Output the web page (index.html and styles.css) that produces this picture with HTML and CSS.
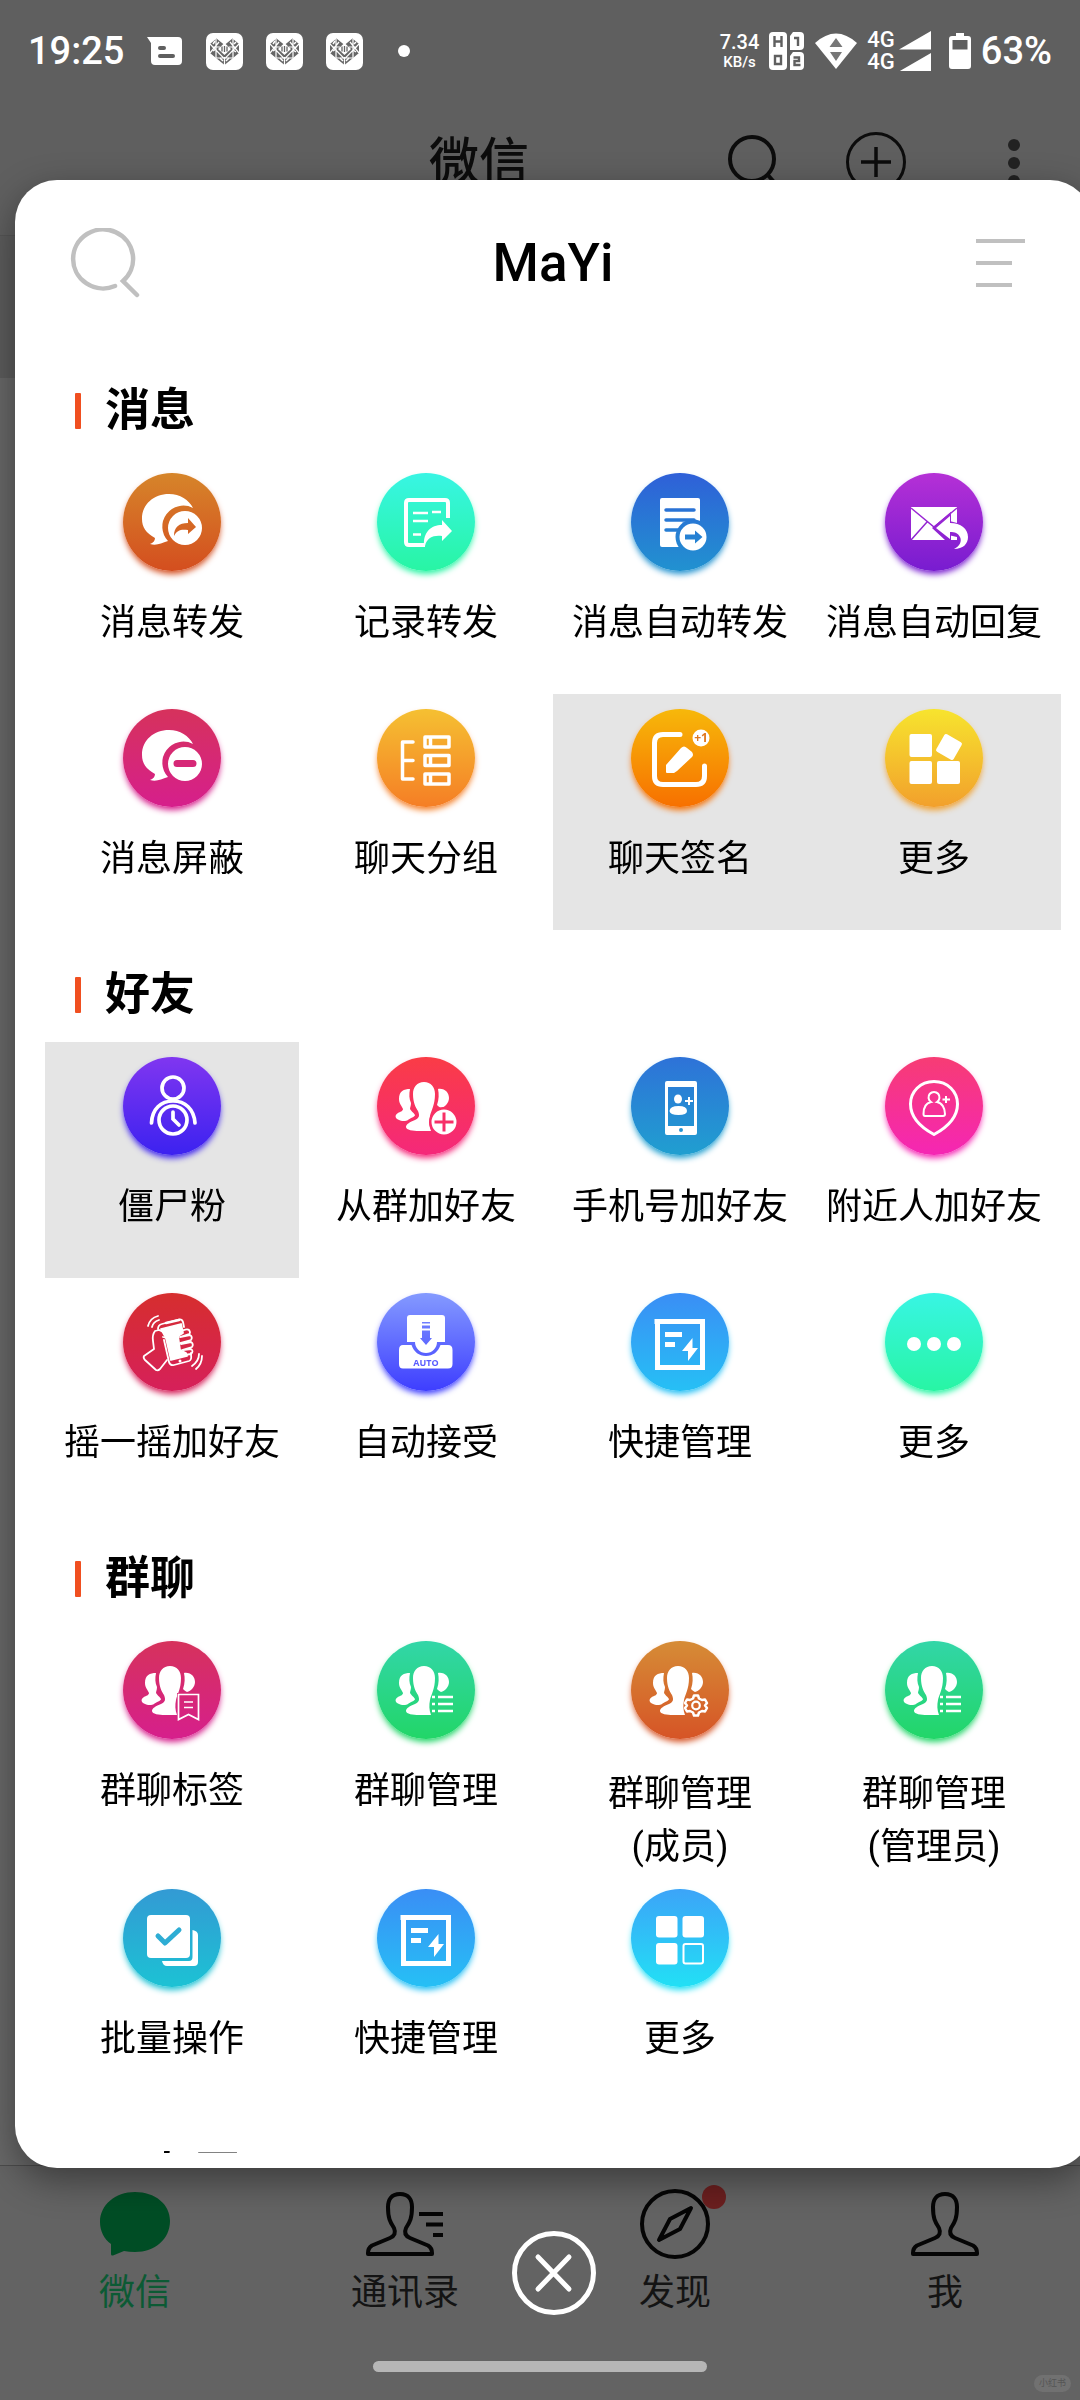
FILE: index.html
```html
<!DOCTYPE html>
<html lang="zh-CN">
<head>
    <meta charset="UTF-8">
    <meta name="viewport" content="width=device-width, initial-scale=1.0">
    <title>MaYi</title>
    <link rel="stylesheet" href="styles.css">
</head>
<body>
    <!-- shared icon shapes -->
    <svg class="defs" aria-hidden="true">
        <defs>
            <symbol id="bubble" viewBox="0 0 98 98">
                <path d="M70 35C66 27 57 21 46 21C31 21 19 31 19 46C19 54 23 60 32 65C32 68 30 70 27 71C34 73 38 70 45 68A21 21 0 0 1 70 35Z"/>
            </symbol>
            <symbol id="people" viewBox="0 0 98 98">
                <path d="M47 25C40 25 36 30 36 37C36 46 39 51 41 54C43 59 42 61 38 63C33 65 29 67 29 70C29 73 36 74 42 74H54C52 69 52 64 53 59C54 54 58 48 58 37C58 30 54 25 47 25Z"/>
                <path d="M33 32C27 32 22 34 22 42C22 47 25 49 26 52C26 54 23 55 21 56C18 58 18 60 20 62C23 64 28 65 31 63C33 61 38 60 38 58C36 55 34 54 33 52C33 50 34 49 34 46C32 42 32 37 33 32Z"/>
                <path d="M61 32C68 31 72 36 72 41C72 46 68 50 64 51C62 50 61 49 60 48C62 42 62 37 61 32Z"/>
            </symbol>
            <symbol id="people-list" viewBox="0 0 98 98">
                <use href="#people"/>
                <path d="M55 56h3M55 63h3M55 70h3M61 56h15M61 63h15M61 70h15" stroke="#fff" stroke-width="2.4"/>
            </symbol>
            <symbol id="quick" viewBox="0 0 98 98">
                <path d="M26 28.500H71.500V74.500H26.500V28.500" fill="none" stroke="#fff" stroke-width="5" stroke-linecap="square"/>
                <path d="M34 39h17v5H34zM34 49h10v5H34zM61.500 45L51 58H57V68L67 55H61.500Z"/>
            </symbol>
            <symbol id="heart-app" viewBox="0 0 37 37">
                <rect width="37" height="37" rx="7" fill="#fff"/>
                <path d="M10.500 5.500L4 11V20L18.500 32L33 20V11L26.500 5.500L18.500 12Z" fill="#666"/>
                <path d="M4 11L18.500 26L33 11M4 20L13 9M33 20L24 9M10 6V25M27 6V25M6 14H14M23 14H31M10 25H27M18.500 24V32" fill="none" stroke="#fff" stroke-width="1.200"/>
                <path d="M7 11l2-3M28 11l2-2M7 18l3-2M27 17l3 2M14 25l3 3M20 28l3-3" stroke="#fff" stroke-width="1.500"/>
                <path d="M18.500 10L25 16L18.500 22L12 16Z" fill="#fff"/>
                <path d="M16 13.500v5M18.500 13v6M21 13.500v5" stroke="#666" stroke-width="1.300"/>
            </symbol>
        </defs>
    </svg>

    <div class="app">
        <div class="status-bar">
            <div class="status-left">
                <span class="clock">19:25</span>
                <svg width="36" height="30" viewBox="0 0 36 30"><path fill="#fff" d="M0 1H31Q35 1 35 5V25Q35 29 31 29H8Q4 29 4 25V7Z"/><path d="M13 12h4M13 20h13" stroke="#5f5f5f" stroke-width="4" stroke-linecap="round"/></svg>
                <svg width="37" height="37"><use href="#heart-app"/></svg>
                <svg width="37" height="37"><use href="#heart-app"/></svg>
                <svg width="37" height="37"><use href="#heart-app"/></svg>
                <span class="more-dot"></span>
            </div>
            <div class="status-right">
                <div class="net-speed"><span>7.34</span><small>KB/s</small></div>
                <svg width="36" height="38" viewBox="0 0 36 38"><rect width="18" height="38" rx="4" fill="#fff"/><path d="M24 0H31Q35 0 35 4V14Q35 18 31 18H21V4ZM24 20H31Q35 20 35 24V34Q35 38 31 38H21V24Z" fill="#fff"/><path d="M5.500 4V15M12.500 4V15M5.500 9.500H12.500M6 24H12V32H6ZM25 6H29V14M24.500 25.500H30V29H25.500V33H31.500" fill="none" stroke="#5f5f5f" stroke-width="2.400"/></svg>
                <svg width="42" height="36" viewBox="0 0 42 36"><path d="M0 10Q21 -9 42 10L21 36Z" fill="#fff"/><path d="M14.500 14L21 5L27.500 14ZM15 19H27L21 28Z" fill="#777"/></svg>
                <div class="sims"><span>4G</span><span>4G</span></div>
                <svg class="signal" width="32" height="40" viewBox="0 0 32 40"><path d="M0 18.500L32 0V18.500ZM0 40.500L32 22V40.500Z" fill="#fff"/></svg>
                <svg class="battery" width="22" height="36" viewBox="0 0 22 36"><path d="M7 0H15V3H19Q22 3 22 6V33Q22 36 19 36H3Q0 36 0 33V6Q0 3 3 3H7Z" fill="#fff"/><path d="M3.500 7H18.500V16.500H3.500Z" fill="#5f5f5f"/></svg>
                <span class="clock">63%</span>
            </div>
        </div>

        <header class="wx-header">
            <h2 class="wx-title">微信</h2>
            <div class="wx-actions">
                <svg width="56" height="62" viewBox="0 0 56 62"><circle cx="24" cy="28" r="22" fill="none" stroke="#0c0c0c" stroke-width="4"/><path d="M39 43L52 58" stroke="#0c0c0c" stroke-width="4"/></svg>
                <svg width="60" height="62" viewBox="0 0 60 62"><circle cx="30" cy="31" r="28.500" fill="none" stroke="#0c0c0c" stroke-width="3"/><path d="M30 16V46M15 31H45" stroke="#0c0c0c" stroke-width="3.500"/></svg>
                <svg width="12" height="62" viewBox="0 0 12 62" fill="#222"><circle cx="6" cy="14" r="6"/><circle cx="6" cy="32" r="6"/><circle cx="6" cy="50" r="6"/></svg>
            </div>
        </header>
        <div class="pinned-chat"></div>
        <main class="chat-list"></main>

        <nav class="tab-bar">
            <a class="tab active" href="#">
                <svg width="72" height="72" viewBox="0 0 72 72"><path d="M36 4C56 4 71 16 71 33C71 51 56 64 36 64Q30 64 25 63L14 67.500Q12 68 12 66V56C5 51 1 43 1 34C1 17 16 4 36 4Z" fill="#004d25"/></svg>
                微信
            </a>
            <a class="tab" href="#">
                <svg width="80" height="72" viewBox="0 0 80 72" fill="none" stroke="#050505" stroke-width="4"><path d="M35 6C26 6 23 12 23 19C23 30 25 34 29 40Q32 47 25 50L7 57.500Q3 60 3 65V66H67V65Q67 60 63 57.500L45 50Q38 47 41 40C45 34 47 30 47 19C47 12 44 6 35 6Z" stroke-linejoin="round"/><path d="M54 26H78M61 36.500H78M68 47H78"/></svg>
                通讯录
            </a>
            <a class="tab" href="#">
                <span class="badge"></span>
                <svg width="72" height="72" viewBox="0 0 72 72" fill="none" stroke="#050505" stroke-width="4"><circle cx="36" cy="36" r="33"/><path d="M52 20L31 31L20 52L41 41Z" stroke-linejoin="round"/></svg>
                发现
            </a>
            <a class="tab" href="#">
                <svg width="70" height="72" viewBox="0 0 70 72" fill="none" stroke="#050505" stroke-width="4"><path d="M35 6C26 6 23 12 23 19C23 30 25 34 29 40Q32 47 25 50L7 57.500Q3 60 3 65V66H67V65Q67 60 63 57.500L45 50Q38 47 41 40C45 34 47 30 47 19C47 12 44 6 35 6Z" stroke-linejoin="round"/></svg>
                我
            </a>
        </nav>
        <div class="home-area">
            <span class="home-handle"></span>
            <span class="watermark">小红书</span>
        </div>
    </div>

    <div class="overlay">
        <section class="panel">
            <header class="panel-header">
                <button class="icon-btn" aria-label="搜索">
                    <svg width="70" height="70" viewBox="0 0 70 70" fill="none" stroke="#c0c0c0" stroke-width="4.500" stroke-linecap="round"><path d="M45 58A30 29.500 0 1 1 53 53L67 67"/></svg>
                </button>
                <h1>MaYi</h1>
                <button class="icon-btn menu-btn" aria-label="菜单">
                    <svg width="50" height="50" viewBox="0 0 50 50" stroke="#c0c0c0" stroke-width="4"><path d="M0 3H49M0 25H36M0 47H36"/></svg>
                </button>
            </header>

            <div class="panel-body">
                <h3 class="section-title">消息</h3>
                <div class="grid">
                    <button class="cell">
                        <span class="icon brown"><svg viewBox="0 0 98 98"><use href="#bubble"/><path fill-rule="evenodd" d="M45 55a17 17 0 1 0 34 0a17 17 0 1 0 -34 0ZM51 63C51 54 56 50 65 50V45L73 54L65 61V57C58 56 54 57 51 63Z"/></svg></span>
                        <span class="label">消息转发</span>
                    </button>
                    <button class="cell">
                        <span class="icon mint"><svg viewBox="0 0 98 98"><path d="M71 45V30Q71 27 68 27H32Q29 27 29 30V69Q29 72 32 72H48" fill="none" stroke="#fff" stroke-width="4"/><path d="M36 40H51M55 39H64M36 48H51M36 61.500H44" stroke="#fff" stroke-width="2.500"/><path d="M47 73C46 59 54 52 65 52V47L75 58L65 68V63C57 62 50 64 48 73Z"/></svg></span>
                        <span class="label">记录转发</span>
                    </button>
                    <button class="cell">
                        <span class="icon blue"><svg viewBox="0 0 98 98"><mask id="doc-cut"><rect width="98" height="98" fill="#fff"/><path d="M35 37H63M35 47H63M35 57H50" stroke="#000" stroke-width="3.500" stroke-linecap="round"/><circle cx="62" cy="64" r="17.500" fill="#000"/></mask><rect x="29" y="25" width="40" height="49" rx="2" mask="url(#doc-cut)"/><path fill-rule="evenodd" d="M48.500 64a13.500 13.500 0 1 0 27 0a13.500 13.500 0 1 0 -27 0ZM54 61.500H64V57.500L71.500 64L64 70.500V66.500H54Z"/></svg></span>
                        <span class="label">消息自动转发</span>
                    </button>
                    <button class="cell">
                        <span class="icon purple"><svg viewBox="0 0 98 98"><mask id="mail-cut"><rect width="98" height="98" fill="#fff"/><path d="M26 35L49 54L72 35M26 67L42 49" fill="none" stroke="#000" stroke-width="1.500"/><path d="M50 55L64 43V50L72 52V62L64 60V68Z" fill="#000" stroke="#000" stroke-width="4"/></mask><rect x="26" y="34" width="46" height="33" mask="url(#mail-cut)"/><path d="M51 55L65 43V50C76 50 83 56 83 64C83 71 78 76 69 76C75 73 77 68 75 64C73 60 70 59 65 59V66Z"/></svg></span>
                        <span class="label">消息自动回复</span>
                    </button>
                    <button class="cell">
                        <span class="icon rose"><svg viewBox="0 0 98 98"><use href="#bubble"/><path fill-rule="evenodd" d="M45 55a17 17 0 1 0 34 0a17 17 0 1 0 -34 0ZM54 51H70a3.500 3.500 0 0 1 0 7H54a3.500 3.500 0 0 1 0 -7Z"/></svg></span>
                        <span class="label">消息屏蔽</span>
                    </button>
                    <button class="cell">
                        <span class="icon amber"><svg viewBox="0 0 98 98" stroke="#fff" stroke-width="3.500" stroke-linecap="round" stroke-linejoin="round"><path d="M36 33H25.500V70H36M26 51.500H36" fill="none"/><path d="M48 28H72V38H48ZM53.500 28V38M48 46.500H72V56.500H48ZM53.500 46.500V56.500M48 65H72V75H48ZM53.500 65V75" fill="none"/></svg></span>
                        <span class="label">聊天分组</span>
                    </button>
                    <button class="cell selected">
                        <span class="icon orange"><svg viewBox="0 0 98 98"><path d="M49 25.500H32Q23.500 25.500 23.500 34V67Q23.500 75.500 32 75.500H65Q73.500 75.500 73.500 67V57" fill="none" stroke="#fff" stroke-width="5" stroke-linecap="round"/><path d="M35 56L50 39Q53 36 56 39L61 43Q63 46 61 48L46 62L43 64H36Q35 64 35 63Z"/><circle cx="70" cy="29" r="8.500"/><text x="70" y="33" text-anchor="middle" class="badge-text">+1</text></svg></span>
                        <span class="label">聊天签名</span>
                    </button>
                    <button class="cell selected">
                        <span class="icon yellow"><svg viewBox="0 0 98 98"><rect x="24.500" y="25" width="22.500" height="23" rx="2"/><rect x="24.500" y="52" width="22.500" height="23" rx="2"/><rect x="52" y="52" width="23" height="23" rx="2"/><rect x="54" y="28" width="20" height="20" rx="2" transform="rotate(30 64 38)"/></svg></span>
                        <span class="label">更多</span>
                    </button>
                </div>

                <h3 class="section-title">好友</h3>
                <div class="grid">
                    <button class="cell selected">
                        <span class="icon violet"><svg viewBox="0 0 98 98" fill="none" stroke="#fff" stroke-width="3.700" stroke-linecap="round"><circle cx="50" cy="31" r="11"/><path d="M28.500 66C29 52 38 44 50 44S71 52 72 66"/><circle cx="50" cy="63" r="14"/><path d="M50 55V62L56 68"/></svg></span>
                        <span class="label">僵尸粉</span>
                    </button>
                    <button class="cell">
                        <span class="icon red"><svg viewBox="0 0 98 98"><mask id="plus-cut"><rect width="98" height="98" fill="#fff"/><circle cx="67" cy="65" r="15" fill="#000"/></mask><use href="#people" mask="url(#plus-cut)"/><path fill-rule="evenodd" d="M54.500 65a12.500 12.500 0 1 0 25 0a12.500 12.500 0 1 0 -25 0ZM65.500 55.500H68.500V63.500H76.500V66.500H68.500V74.500H65.500V66.500H57.500V63.500H65.500Z"/></svg></span>
                        <span class="label">从群加好友</span>
                    </button>
                    <button class="cell">
                        <span class="icon ocean"><svg viewBox="0 0 98 98"><path fill-rule="evenodd" d="M36 24H64Q66 24 66 26V76Q66 78 64 78H36Q34 78 34 76V26Q34 24 36 24ZM37 30H63V69H37ZM48 73a2 2 0 1 0 4 0a2 2 0 1 0 -4 0Z"/><ellipse cx="47" cy="42" rx="4" ry="4.500"/><path d="M38.500 54Q39 49 47.500 49T56 54Q56 58 47.500 58T38.500 54ZM57 40h2v3h3v2h-3v3h-2v-3h-3v-2h3Z"/></svg></span>
                        <span class="label">手机号加好友</span>
                    </button>
                    <button class="cell">
                        <span class="icon pink"><svg viewBox="0 0 98 98" fill="none" stroke="#fff"><path d="M49 24.500C35 24.500 25.500 35 25.500 47C25.500 61 37 71 49 77.500C61 71 72.500 61 72.500 47C72.500 35 63 24.500 49 24.500Z" stroke-width="3" stroke-linejoin="round"/><path d="M46 45A5.500 5.500 0 1 1 52 45C57 46 60 51 60 57Q60 59 58 59H40Q38.500 59 38.500 57C38.500 51 41 46 46 45ZM61 39V46M57.500 42.500H65" stroke-width="2"/></svg></span>
                        <span class="label">附近人加好友</span>
                    </button>
                    <button class="cell">
                        <span class="icon crimson"><svg viewBox="0 0 98 98" fill="none" stroke="#fff" stroke-width="1.800" stroke-linecap="round" stroke-linejoin="round"><path d="M35 36Q35 32 39 31L56 26.500Q59 26 60 29L61 34M41 47L46 69Q47 73 51 72L66 68Q69 67 68 62L68 60"/><path d="M43 30L56 27" stroke-width="2.500"/><path d="M38 36L58 31L60 40L55 43L57 57L63 60L64 63L48 67L43 45Z" fill="#fff"/><path d="M36 37L32 38Q29 42 30 48L31 56L21 63Q20 65 22 67L33 77Q35 78 37 76L44 67M36 37L49 43Q51 46 47 46L40 44"/><path d="M56 39Q64 35 66 37Q68 40 66 41L57 44M57 44L67 42Q70 44 68 47L57 50M58 51L68 49Q71 51 69 54L59 57M60 57L68 56Q71 58 68 61L62 62"/><path d="M25 33Q27 25 35 23M29 34Q30 29 36 27M69 73Q76 68 76 61M73 76Q79 71 79 63"/><circle cx="57" cy="68" r="1.500" fill="#fff" stroke="none"/></svg></span>
                        <span class="label">摇一摇加好友</span>
                    </button>
                    <button class="cell">
                        <span class="icon indigo"><svg viewBox="0 0 98 98"><path fill-rule="evenodd" d="M33 22H65Q68 22 68 25V49H60A11 11 0 0 1 38 49H30V25Q30 22 33 22ZM45 29V30.500H53V29ZM45 32.500V35.500H53V32.500ZM45 37.500V45H43L49 52L55 45H53V37.500Z"/><path fill-rule="evenodd" d="M26 52H34.500C37 59 42 63 49 63S61 59 63.500 52H71Q75.500 52 75.500 57V71Q75.500 75.500 71 75.500H26Q22 75.500 22 71V57Q22 52 26 52Z"/><text x="49" y="73" text-anchor="middle" class="auto-text">AUTO</text></svg></span>
                        <span class="label">自动接受</span>
                    </button>
                    <button class="cell">
                        <span class="icon sky"><svg viewBox="0 0 98 98"><use href="#quick"/></svg></span>
                        <span class="label">快捷管理</span>
                    </button>
                    <button class="cell">
                        <span class="icon mint"><svg viewBox="0 0 98 98"><circle cx="29" cy="51" r="7"/><circle cx="49" cy="51" r="7"/><circle cx="69" cy="51" r="7"/></svg></span>
                        <span class="label">更多</span>
                    </button>
                </div>

                <h3 class="section-title">群聊</h3>
                <div class="grid">
                    <button class="cell">
                        <span class="icon rose"><svg viewBox="0 0 98 98"><mask id="tag-cut"><rect width="98" height="98" fill="#fff"/><rect x="54" y="52" width="24" height="30" fill="#000"/></mask><use href="#people" mask="url(#tag-cut)"/><path d="M55.500 53.500H75.500V78.500L65.500 73.500L55.500 78.500ZM61 61H70M61 66.500H70" fill="none" stroke="#fff" stroke-width="1.700"/></svg></span>
                        <span class="label">群聊标签</span>
                    </button>
                    <button class="cell">
                        <span class="icon green"><svg viewBox="0 0 98 98"><use href="#people-list"/></svg></span>
                        <span class="label">群聊管理</span>
                    </button>
                    <button class="cell">
                        <span class="icon copper"><svg viewBox="0 0 98 98"><use href="#people"/><path d="M63 54.500H67L68 57.500L71 59L74 58.500L76 62L74 64.500L76 67L74 70.500L71 70L68 71.500L67 74.500H63L62 71.500L59 70L56 70.500L54 67L56 64.500L54 62L56 58.500L59 59L62 57.500Z" fill="none" stroke="#fff" stroke-width="2.500" stroke-linejoin="round"/><circle cx="65" cy="64.500" r="3.800" fill="none" stroke="#fff" stroke-width="2.200"/></svg></span>
                        <span class="label two-line">群聊管理<br>(成员)</span>
                    </button>
                    <button class="cell">
                        <span class="icon green"><svg viewBox="0 0 98 98"><use href="#people-list"/></svg></span>
                        <span class="label two-line">群聊管理<br>(管理员)</span>
                    </button>
                    <button class="cell">
                        <span class="icon teal"><svg viewBox="0 0 98 98"><rect x="24" y="26" width="43" height="43" rx="4"/><path d="M69.500 41Q75 42 75 46V73Q75 77 71 77H44Q40 77 39 72H66Q69.500 72 69.500 68Z"/><path d="M35 47L42 54L56 41" fill="none" stroke="#2eadd4" stroke-width="5" stroke-linecap="round" stroke-linejoin="round"/></svg></span>
                        <span class="label">批量操作</span>
                    </button>
                    <button class="cell">
                        <span class="icon sky"><svg viewBox="0 0 98 98"><use href="#quick"/></svg></span>
                        <span class="label">快捷管理</span>
                    </button>
                    <button class="cell">
                        <span class="icon cyan"><svg viewBox="0 0 98 98"><rect x="25" y="27" width="21.500" height="21.500" rx="3"/><rect x="51.500" y="27" width="21.500" height="21.500" rx="3"/><rect x="25" y="54" width="21.500" height="21.500" rx="3"/><rect x="52.500" y="55" width="19.500" height="19.500" rx="2" fill="none" stroke="#fff" stroke-width="2"/></svg></span>
                        <span class="label">更多</span>
                    </button>
                </div>

                <h3 class="section-title">朋友圈</h3>
            </div>
        </section>

        <button class="close-btn" aria-label="关闭">
            <svg width="84" height="84" viewBox="0 0 84 84" fill="none" stroke="#fff" stroke-linecap="round"><circle cx="42" cy="42" r="39.500" stroke-width="5"/><path d="M26 26L57 58M57 26L26 58" stroke-width="5"/></svg>
        </button>
    </div>
</body>
</html>
```

FILE: styles.css
```css
* {
    box-sizing: border-box;
}
body {
    margin: 0;
    overflow: hidden;
    font-family: Roboto, "Noto Sans CJK SC", sans-serif;
    background-color: #666;
    color: #000;
}
h1, h2, h3 {
    margin: 0;
}
svg {
    display: block;
}
button {
    font: inherit;
    color: inherit;
    border: none;
    padding: 0;
    background: none;
    cursor: pointer;
}
.defs {
    position: absolute;
    width: 0;
    height: 0;
}

/* dimmed app behind the panel */
.app {
    display: flex;
    flex-direction: column;
    height: 100vh;
    background-color: #5f5f5f;
}
.status-bar {
    display: flex;
    justify-content: space-between;
    align-items: center;
    height: 102px;
    padding: 0 28px;
    color: #fff;
}
.status-left {
    display: flex;
    align-items: center;
    gap: 23px;
}
.status-right {
    display: flex;
    align-items: center;
    gap: 10px;
}
.clock {
    font-size: 38px;
    font-weight: 500;
    line-height: 44px;
}
.more-dot {
    width: 12px;
    height: 12px;
    margin-left: 12px;
    border-radius: 50%;
    background: #fff;
}
.net-speed {
    display: flex;
    flex-direction: column;
    align-items: center;
    font-size: 20px;
    font-weight: 500;
    line-height: 22px;
}
.net-speed small {
    font-size: 15px;
    line-height: 18px;
}
.sims {
    display: flex;
    flex-direction: column;
    font-size: 22px;
    font-weight: 500;
    line-height: 22px;
}
.signal {
    margin-left: -6px;
}
.battery {
    margin-left: 8px;
}
.wx-header {
    display: flex;
    align-items: center;
    height: 133px;
    padding: 0 60px 14px 230px;
}
.wx-title {
    flex: 1;
    text-align: center;
    font-size: 50px;
    line-height: 62px;
    font-weight: 500;
    color: #0c0c0c;
}
.wx-actions {
    display: flex;
    align-items: center;
    gap: 62px;
}
.wx-actions svg:last-child {
    margin-left: 40px;
}
.pinned-chat {
    height: 143px;
    background: #5c5c5c;
    border-top: 1px solid #555;
}
.chat-list {
    flex: 1;
    background: #686868;
}
.tab-bar {
    display: flex;
    padding-top: 22px;
    background: #636363;
    border-top: 1px solid #4c4c4c;
}
.tab {
    flex: 1;
    position: relative;
    display: flex;
    flex-direction: column;
    align-items: center;
    gap: 6px;
    font-size: 36px;
    line-height: 54px;
    color: #141414;
    text-decoration: none;
}
.tab.active {
    color: #0c5a34;
}
.badge {
    position: absolute;
    top: -3px;
    left: calc(50% + 27px);
    width: 24px;
    height: 24px;
    border-radius: 50%;
    background: #6b1f1f;
}
.home-area {
    position: relative;
    height: 80px;
    padding-top: 41px;
    background: #636363;
}
.home-handle {
    display: block;
    width: 31%;
    height: 11px;
    margin: 0 auto;
    border-radius: 6px;
    background: #b6b6b6;
}
.watermark {
    position: absolute;
    right: 9px;
    bottom: 8px;
    padding: 0 5px;
    border-radius: 9px;
    font-size: 9px;
    line-height: 17px;
    background: #717171;
    color: #555;
}

/* panel */
.overlay {
    position: fixed;
    inset: 0;
    display: flex;
    flex-direction: column;
    padding: 180px 0 85px 15px;
}
.panel {
    flex: 1;
    min-height: 0;
    display: flex;
    flex-direction: column;
    margin-right: -12px;
    padding-bottom: 15px;
    border-radius: 42px;
    background: #fff;
    box-shadow: 0 12px 36px rgba(0, 0, 0, 0.4);
}
.panel-header {
    display: flex;
    align-items: center;
    height: 166px;
    flex-shrink: 0;
    padding: 0 66px 0 55px;
}
.panel-header h1 {
    flex: 1;
    text-align: center;
    font-size: 53px;
    line-height: 66px;
    font-weight: 500;
}
.icon-btn {
    width: 70px;
}
.menu-btn {
    width: 60px;
}
.menu-btn svg {
    margin-left: auto;
}
.panel-body {
    flex: 1;
    min-height: 0;
    overflow: hidden;
    padding: 0 31px 0 30px;
}
.section-title {
    display: flex;
    align-items: center;
    gap: 24px;
    padding: 32px 30px 14px;
    font-size: 45px;
    line-height: 66px;
    font-weight: bold;
}
.section-title::before {
    content: "";
    width: 6px;
    height: 36px;
    border-radius: 1px;
    background: #f04f20;
}
.grid {
    display: grid;
    grid-template-columns: repeat(4, 1fr);
}
.cell {
    display: flex;
    flex-direction: column;
    align-items: center;
    gap: 26px;
    min-height: 236px;
    padding-top: 15px;
}
.cell.selected {
    background: #e5e5e5;
}
.label {
    font-size: 36px;
    line-height: 53px;
    white-space: nowrap;
}
.two-line {
    padding-top: 3px;
}
.icon {
    width: 98px;
    height: 98px;
    border-radius: 50%;
    background: linear-gradient(var(--from), var(--to));
    box-shadow: 0 4px 6px -1px var(--to);
}
.icon svg {
    width: 98px;
    height: 98px;
    fill: #fff;
}
.icon svg[fill="none"] {
    fill: none;
}
.badge-text {
    font: bold 12px "Noto Sans", sans-serif;
    fill: #e07820;
}
.auto-text {
    font: bold 9px "Open Sans", sans-serif;
    fill: #5a5cff;
}
.brown { --from: #d6852a; --to: #d44e1f; }
.mint { --from: #38f5e4; --to: #28f5a4; }
.blue { --from: #2f60d8; --to: #2192d0; }
.purple { --from: #b530d6; --to: #781cd0; }
.rose { --from: #d6325c; --to: #d61f8c; }
.amber { --from: #f5c032; --to: #f57e25; }
.orange { --from: #f7b80a; --to: #f77000; }
.yellow { --from: #f7e42e; --to: #f2a02c; }
.violet { --from: #8036f0; --to: #3c22f0; }
.red { --from: #fa3c46; --to: #f5287a; }
.ocean { --from: #2e72d8; --to: #209fd0; }
.pink { --from: #f73c74; --to: #f526b4; }
.crimson { --from: #d62e2e; --to: #d6205a; }
.indigo { --from: #849aff; --to: #3e3eff; }
.sky { --from: #3a8ef5; --to: #26c0f5; }
.green { --from: #32d6a8; --to: #22d668; }
.copper { --from: #d68c36; --to: #d65426; }
.teal { --from: #339ad4; --to: #1cc2d4; }
.cyan { --from: #3ca4f8; --to: #22e0f5; }

.close-btn {
    align-self: center;
    width: 84px;
    height: 84px;
    margin-top: 63px;
    margin-right: -12px;
}
```
